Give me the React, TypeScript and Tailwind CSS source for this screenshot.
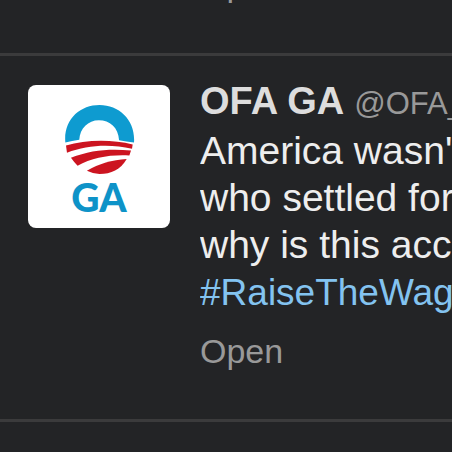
function Logo() {
  return (
    <svg viewBox="130 78 214 212" className="block h-[71px] w-[71px]" role="img" aria-label="OFA logo">
      <path d="M134 193 C128 124 178 80 237 80 C298 80 346 128 341 193 Q318 190 296 186 C294 148 268 126 235 126 C203 126 178 150 176 185 Q154 188 134 193Z" fill="#0e9bd0" />
      <path d="M136 202 C195 184 275 183 337 199 L335 212 C270 197 200 200 139 224 Z" fill="#cc1420" />
      <path d="M151 239 C210 215 270 211 332 217 L327 232 C270 229 215 238 171 263 Q160 252 151 239Z" fill="#cc1420" />
      <path d="M199 278 C235 257 275 246 319 243 C300 276 272 288 237 288 Q217 287 199 278Z" fill="#cc1420" />
    </svg>
  );
}

function Avatar() {
  return (
    <a href="#profile" className="mt-[7px] flex h-[143px] w-[142px] shrink-0 flex-col items-center rounded-lg bg-white pt-[19px]">
      <Logo />
      <span className="mt-[3px] font-['Lato',sans-serif] text-[39px] leading-[38px] font-black text-[#0e93c8]">GA</span>
    </a>
  );
}

function OpenLink() {
  return (
    <a href="#open" className="block text-[34px] leading-[47px] text-[#999999]">
      Open
    </a>
  );
}

export default function App() {
  return (
    <main className="min-h-screen overflow-hidden bg-[#232426] font-['Liberation_Sans',Arial,sans-serif] whitespace-nowrap">
      <article className="flex h-[53px] items-end overflow-hidden pb-[45px] pl-[200px]">
        <OpenLink />
      </article>
      <article className="flex gap-[30px] border-y-3 border-[#3b3b3c] pt-[22px] pb-[44px] pl-7">
        <Avatar />
        <div className="min-w-0 flex-1 overflow-hidden">
          <header className="flex items-baseline gap-[10px] leading-[47px]">
            <strong className="text-[38px] text-[#dddddd]">OFA GA</strong>
            <span className="text-[31px] text-[#999999]">@OFA_</span>
          </header>
          <p className="text-[39px] leading-[47px] text-[#eeeeee]">
            America wasn't
            <br />
            who settled for
            <br />
            why is this acc
            <br />
            <a href="#tag" className="text-[37px] text-[#83c3f0]">
              #RaiseTheWag
            </a>
          </p>
          <div className="mt-3">
            <OpenLink />
          </div>
        </div>
      </article>
    </main>
  );
}
